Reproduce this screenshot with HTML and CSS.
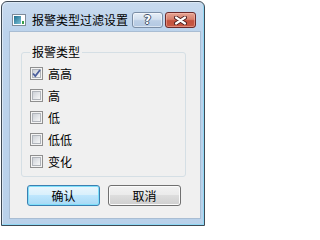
FILE: index.html
```html
<!DOCTYPE html>
<html lang="zh-CN">
<head>
<meta charset="utf-8">
<title>报警类型过滤设置</title>
<link rel="stylesheet" href="styles.css">
</head>
<body>
<div class="window">
  <div class="titlebar">
    <svg class="app-icon" width="14" height="12" viewBox="0 0 14 12">
      <defs>
        <linearGradient id="ig" x1="0" y1="0" x2="1" y2="1">
          <stop offset="0" stop-color="#1f6f8f"/>
          <stop offset="1" stop-color="#7fc3d9"/>
        </linearGradient>
      </defs>
      <rect x="0.5" y="0.5" width="13" height="11" fill="#ffffff" stroke="#7e8b99"/>
      <rect x="2" y="2" width="7" height="8" fill="url(#ig)"/>
      <rect x="10" y="7" width="2" height="3" fill="#3aa04a"/>
    </svg>
    <span class="title">报警类型过滤设置</span>
    <div class="caption-buttons">
      <span class="cap help">?</span>
      <span class="cap close">
        <svg width="13" height="9" viewBox="0 0 13 9">
          <path d="M2 1.5 L11 7.5 M11 1.5 L2 7.5" stroke="#4a1c1c" stroke-width="4" stroke-linecap="round"/>
          <path d="M2 1.5 L11 7.5 M11 1.5 L2 7.5" stroke="#ffffff" stroke-width="2.2" stroke-linecap="round"/>
        </svg>
      </span>
    </div>
  </div>
  <div class="client">
    <fieldset class="group">
      <legend class="group-title">报警类型</legend>
      <div class="group-body">
        <div class="row"><span class="cb checked"><svg width="9" height="9" viewBox="0 0 9 9"><path d="M1 4.5 L3.3 7 L8 1" fill="none" stroke="#4b5e9c" stroke-width="1.8"/></svg></span><span class="label">高高</span></div>
        <div class="row"><span class="cb"></span><span class="label">高</span></div>
        <div class="row"><span class="cb"></span><span class="label">低</span></div>
        <div class="row"><span class="cb"></span><span class="label">低低</span></div>
        <div class="row"><span class="cb"></span><span class="label">变化</span></div>
      </div>
    </fieldset>
    <div class="buttons">
      <button class="btn btn-default">确认</button>
      <button class="btn">取消</button>
    </div>
  </div>
</div>
</body>
</html>
```

FILE: styles.css
```css
html, body {
  margin: 0;
  padding: 0;
  background: #ffffff;
}
body {
  font-family: "Noto Sans CJK SC", "Noto Sans", sans-serif;
  font-size: 12px;
  color: #000;
}
.window {
  margin: 1px 0 0 1px;
  width: 204px;
  height: 225px;
  box-sizing: border-box;
  border: 1px solid #3f4a55;
  border-radius: 6px 6px 0 0;
  background: linear-gradient(#c8daee 0px, #bcd3ec 30px, #b9d1ea 100%);
  box-shadow: inset -1px -1px 0 #8fd8f5, inset 1px 1px 0 #dbe8f5;
  padding: 0 3px 6px 7px;
  display: flex;
  flex-direction: column;
}
.titlebar {
  height: 29px;
  box-sizing: border-box;
  padding: 10px 5px 0 3px;
  display: flex;
  align-items: flex-start;
}
.app-icon {
  margin-top: 2px;
  flex: none;
}
.title {
  margin-left: 6px;
  line-height: 16px;
  white-space: nowrap;
}
.caption-buttons {
  margin-left: auto;
  display: flex;
  gap: 2px;
}
.cap {
  width: 31px;
  height: 16px;
  box-sizing: border-box;
  border-radius: 3px;
  display: flex;
  align-items: center;
  justify-content: center;
}
.help {
  border: 1px solid #7b8ea6;
  background: linear-gradient(#e6eef7 0%, #d3e0ef 45%, #bccfe6 55%, #b3c8e2 100%);
  box-shadow: inset 0 0 0 1px rgba(255,255,255,0.5);
  font-family: "DejaVu Sans", sans-serif;
  font-weight: bold;
  font-size: 12px;
  line-height: 14px;
  color: #ffffff;
  text-shadow: -1px 0 0 #44546a, 1px 0 0 #44546a, 0 -1px 0 #44546a, 0 1px 0 #44546a;
}
.close {
  border: 1px solid #6b2a2a;
  background: linear-gradient(#e6a594 0%, #d7806d 45%, #c4513d 55%, #c65a45 100%);
  box-shadow: inset 0 0 0 1px rgba(255,200,190,0.45);
}
.client {
  height: 188px;
  box-sizing: border-box;
  border: 1px solid #a9bdd3;
  background: #f0f0f0;
  padding: 13px 0 0 11px;
}
.group {
  margin: 0;
  padding: 0;
  width: 165px;
  box-sizing: border-box;
  border: 1px solid #d5dfe5;
  border-radius: 3px;
  min-inline-size: 0;
}
.group-title {
  margin-left: 8px;
  padding: 0 2px;
  line-height: 14px;
  font-size: 12px;
}
.group-body {
  padding: 4px 0 3px 8px;
}
.row {
  height: 22px;
  display: flex;
  align-items: flex-start;
}
.cb {
  margin-top: 4px;
  width: 13px;
  height: 13px;
  box-sizing: border-box;
  border: 1px solid #8f8f8f;
  background: #f4f4f4;
  position: relative;
  flex: none;
}
.cb::before {
  content: "";
  position: absolute;
  left: 1px;
  top: 1px;
  width: 9px;
  height: 9px;
  box-sizing: border-box;
  border: 1px solid #b0b4ba;
  background: linear-gradient(135deg, #cdd1d7 0%, #e6e8eb 60%, #f6f6f6 100%);
}
.cb svg {
  position: absolute;
  left: 1px;
  top: 1px;
}
.label {
  margin-left: 5px;
  line-height: 22px;
}
.buttons {
  margin: 8px 0 0 6px;
  display: flex;
  gap: 8px;
}
.btn {
  width: 73px;
  height: 21px;
  box-sizing: border-box;
  padding: 0;
  font-family: "Noto Sans CJK SC", "Noto Sans", sans-serif;
  font-size: 12px;
  line-height: 19px;
  color: #000;
  border: 1px solid #707070;
  border-radius: 3px;
  background: linear-gradient(#f2f2f2 0%, #ebebeb 45%, #dddddd 50%, #cfcfcf 100%);
  box-shadow: inset 0 0 0 1px #fbfbfb;
}
.btn-default {
  border-color: #3c7fb1;
  background: linear-gradient(#eaf6fd 0%, #d9f0fc 45%, #bee6fd 50%, #a7d9f5 100%);
  box-shadow: inset 0 0 0 1px #7fe0fb;
}
```
